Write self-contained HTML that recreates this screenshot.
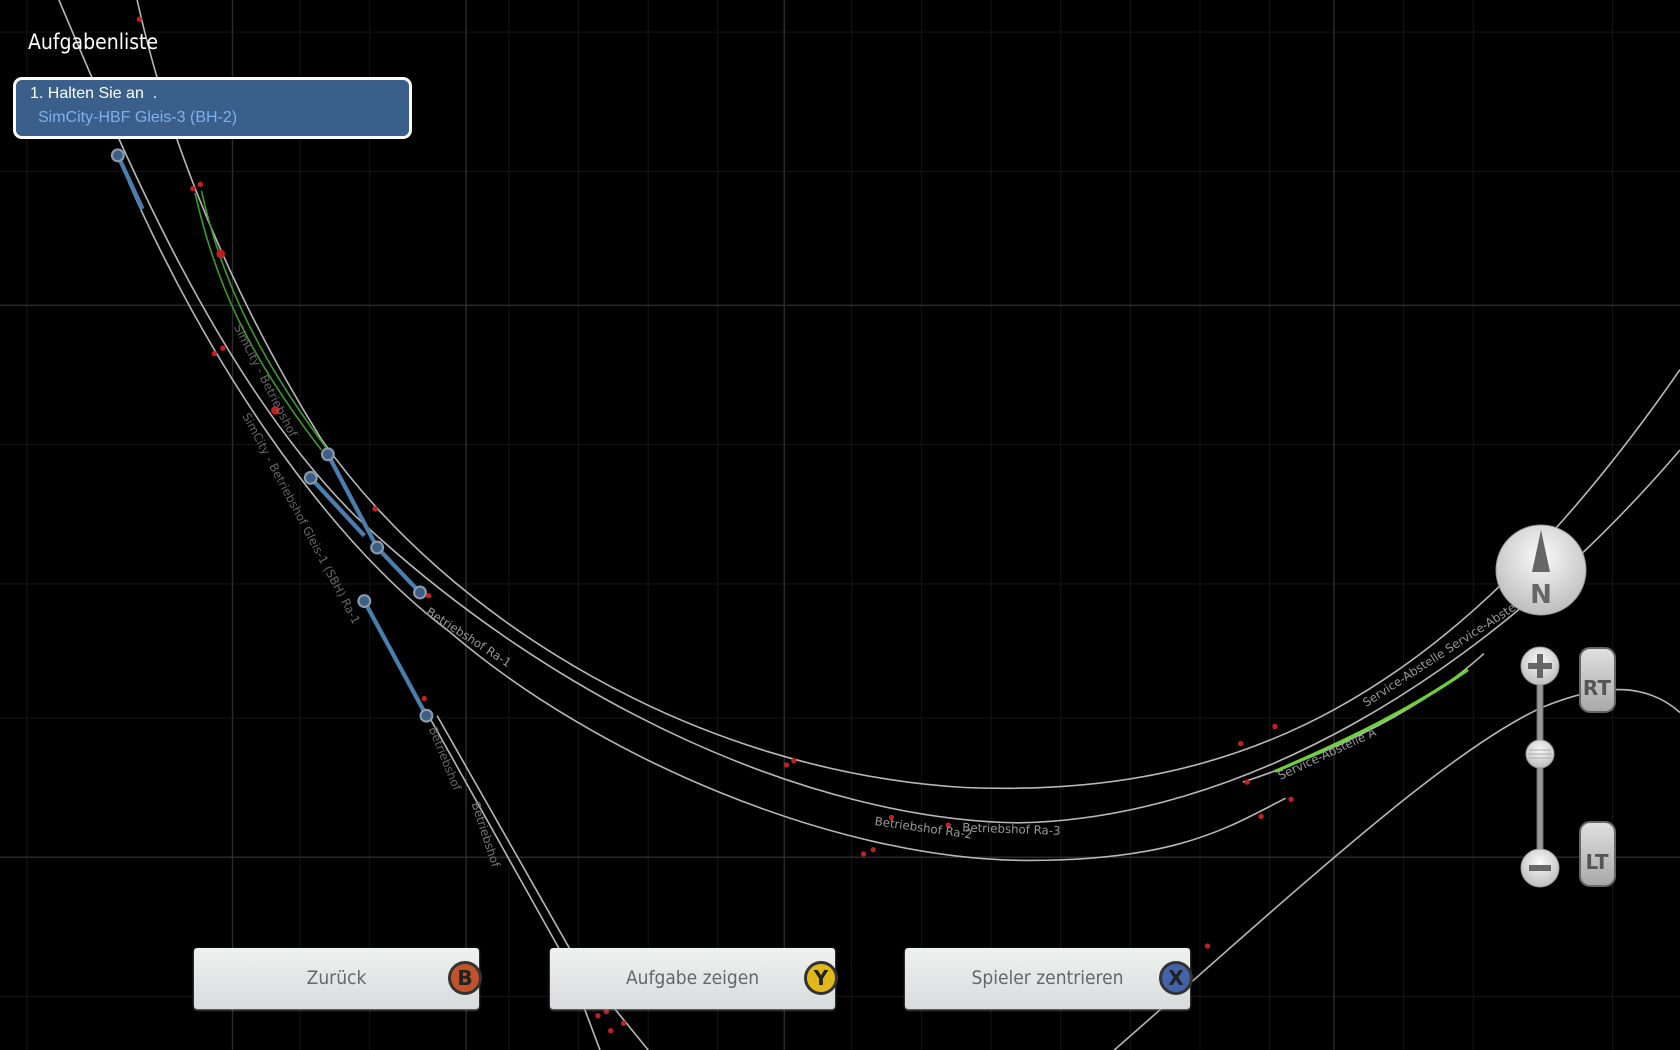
<!DOCTYPE html>
<html><head><meta charset="utf-8"><style>
html,body{margin:0;padding:0;background:#000;width:1680px;height:1050px;overflow:hidden;font-family:"Liberation Sans","DejaVu Sans",sans-serif}
#map{position:absolute;left:0;top:0}
.title{position:absolute;left:28px;top:30px;color:#fff;font-size:21px;font-family:"DejaVu Sans Condensed","DejaVu Sans",sans-serif}
.task{position:absolute;left:13px;top:77px;width:393px;height:56px;border:3px solid #fff;border-radius:9px;background:#3a5f8a}
.task .a{position:absolute;left:14px;top:5px;color:#fff;font-size:16px}
.task .b{position:absolute;left:22px;top:29px;color:#7fb0ea;font-size:16px}
.btn{position:absolute;top:948px;width:285px;height:61px;border-radius:3px;background:linear-gradient(#f0f1f1,#d8dbdc);color:#666;font-size:19px;font-family:"DejaVu Sans Condensed","DejaVu Sans",sans-serif;line-height:61px;text-align:center;box-shadow:0 1px 2px #888}
.ic{position:absolute;right:-3px;top:13px;width:34px;height:34px;border-radius:50%;border:3px solid #333;box-sizing:border-box;font:bold 20px "DejaVu Sans",sans-serif;line-height:28px;text-align:center;color:#222}
</style></head><body>
<svg id="map" width="1680" height="1050" viewBox="0 0 1568 980" preserveAspectRatio="none">
<g stroke="#141414" stroke-width="1">
<line x1="25" y1="0" x2="25" y2="980"/><line x1="280" y1="0" x2="280" y2="980"/><line x1="345" y1="0" x2="345" y2="980"/><line x1="475" y1="0" x2="475" y2="980"/><line x1="540" y1="0" x2="540" y2="980"/><line x1="605" y1="0" x2="605" y2="980"/><line x1="670" y1="0" x2="670" y2="980"/><line x1="795" y1="0" x2="795" y2="980"/><line x1="860" y1="0" x2="860" y2="980"/><line x1="925" y1="0" x2="925" y2="980"/><line x1="990" y1="0" x2="990" y2="980"/><line x1="1055" y1="0" x2="1055" y2="980"/><line x1="1120" y1="0" x2="1120" y2="980"/><line x1="1185" y1="0" x2="1185" y2="980"/><line x1="1310" y1="0" x2="1310" y2="980"/><line x1="1375" y1="0" x2="1375" y2="980"/><line x1="1505" y1="0" x2="1505" y2="980"/>
<line x1="0" y1="30" x2="1568" y2="30"/><line x1="0" y1="160" x2="1568" y2="160"/><line x1="0" y1="415" x2="1568" y2="415"/><line x1="0" y1="545" x2="1568" y2="545"/><line x1="0" y1="670" x2="1568" y2="670"/><line x1="0" y1="930" x2="1568" y2="930"/>
</g>
<g stroke="#2c2c2c" stroke-width="1.3">
<line x1="217" y1="0" x2="217" y2="980"/><line x1="732" y1="0" x2="732" y2="980"/><line x1="1245" y1="0" x2="1245" y2="980"/><line x1="435" y1="0" x2="435" y2="980"/>
<line x1="0" y1="285" x2="1568" y2="285"/><line x1="0" y1="800" x2="1568" y2="800"/>
</g>
<g fill="none" stroke="#b8b8b8" stroke-width="1.5">
<path d="M128 0 C150 100,200 250,300 410 C420 580,650 720,900 735 C1150 745,1350 660,1568 345"/>
<path d="M55 0 C110 130,200 350,330 480 C520 660,760 765,950 768 C1150 765,1380 640,1568 420"/>
<path d="M120 170 C190 330,300 500,420 590 C560 710,780 800,950 803 C1100 805,1150 770,1200 745"/>
<path d="M400 668 L530 900 L560 980" />
<path d="M408 668 L540 900 L605 980" />
<path d="M1040 980 C1200 840,1350 700,1440 660 C1500 635,1540 640,1568 665"/>
<path d="M1160 730 C1250 700,1330 660,1385 610"/>
</g>
<g fill="none" stroke="#3a9a2a" stroke-width="1.5">
<path d="M182 180 C200 260,230 330,300 420"/><path d="M188 178 C205 255,238 330,306 420"/>
</g>
<path d="M1190 720 C1260 690,1320 660,1370 625" stroke="#6cd23a" stroke-width="3" fill="none"/>
<g fill="none" stroke="#4a7fad" stroke-width="4">
<path d="M110 145 L133 195"/><path d="M306 424 L352 511 L392 553"/><path d="M290 446 L340 500"/><path d="M340 561 L398 668"/>
</g>
<g fill="#3d5f85" stroke="#8a9aaa" stroke-width="2">
<circle cx="110" cy="145" r="5.5"/><circle cx="306" cy="424" r="5.5"/><circle cx="290" cy="446" r="5.5"/><circle cx="352" cy="511" r="5.5"/><circle cx="392" cy="553" r="5.5"/><circle cx="340" cy="561" r="5.5"/><circle cx="398" cy="668" r="5.5"/>
</g>
<g fill="#c02020">
<circle cx="130" cy="18" r="2.5"/><circle cx="180" cy="176" r="2.5"/><circle cx="187" cy="172" r="2.5"/><circle cx="206" cy="237" r="4"/><circle cx="200" cy="330" r="2.5"/><circle cx="208" cy="325" r="2.5"/><circle cx="257" cy="383" r="4"/><circle cx="350" cy="475" r="2.5"/><circle cx="400" cy="556" r="2.5"/><circle cx="396" cy="652" r="2.5"/><circle cx="734" cy="714" r="2.5"/><circle cx="741" cy="710" r="2.5"/><circle cx="806" cy="797" r="2.5"/><circle cx="815" cy="793" r="2.5"/><circle cx="832" cy="763" r="2.5"/><circle cx="885" cy="770" r="2.5"/><circle cx="1158" cy="694" r="2.5"/><circle cx="1190" cy="678" r="2.5"/><circle cx="1164" cy="730" r="2.5"/><circle cx="1177" cy="762" r="2.5"/><circle cx="1205" cy="746" r="2.5"/><circle cx="1127" cy="883" r="2.5"/><circle cx="558" cy="948" r="2.5"/><circle cx="566" cy="944" r="2.5"/><circle cx="570" cy="962" r="2.5"/><circle cx="582" cy="955" r="2.5"/>
</g>
<g fill="#999" font-family="DejaVu Sans,sans-serif" font-size="11">
<text transform="translate(397,573) rotate(33)">Betriebshof Ra-1</text>
<text transform="translate(816,770) rotate(8)">Betriebshof Ra-2</text>
<text transform="translate(898,776) rotate(2)">Betriebshof Ra-3</text>
<text transform="translate(1195,728) rotate(-25)">Service-Abstelle A</text>
<text transform="translate(1275,660) rotate(-33)">Service-Abstelle Service-Abstelle B</text>
<text fill="#666" transform="translate(218,305) rotate(63)">SimCity - Betriebshof</text>
<text fill="#666" transform="translate(226,388) rotate(62)">SimCity - Betriebshof Gleis-1 (SBH) Ra-1</text>
<text fill="#666" transform="translate(400,680) rotate(68)">Betriebshof</text>
<text fill="#777" transform="translate(440,750) rotate(72)">Betriebshof</text>
</g>
</svg>
<div class="title">Aufgabenliste</div>
<div class="task"><div class="a">1. Halten Sie an &nbsp;.</div><div class="b">SimCity-HBF Gleis-3 (BH-2)</div></div>
<div class="btn" style="left:194px">Zurück<div class="ic" style="background:#c0532a">B</div></div>
<div class="btn" style="left:550px">Aufgabe zeigen<div class="ic" style="background:#e0b81c">Y</div></div>
<div class="btn" style="left:905px">Spieler zentrieren<div class="ic" style="background:#4462a8">X</div></div>
<svg style="position:absolute;left:1480px;top:510px" width="200" height="400">
<defs><radialGradient id="g" cx="50%" cy="35%" r="65%"><stop offset="0" stop-color="#fafafa"/><stop offset="1" stop-color="#bdbdbd"/></radialGradient>
<linearGradient id="t" x1="0" y1="0" x2="0" y2="1"><stop offset="0" stop-color="#e0e0e0"/><stop offset="1" stop-color="#a8a8a8"/></linearGradient></defs>
<circle cx="61" cy="60" r="45" fill="url(#g)" stroke="#999" stroke-width="1"/>
<path d="M61 20 L52 62 L70 62 Z" fill="#666"/>
<text x="61" y="93" text-anchor="middle" font-family="DejaVu Sans,sans-serif" font-weight="bold" font-size="26" fill="#666">N</text>
<rect x="57" y="166" width="6" height="200" fill="#999" stroke="#666"/>
<circle cx="60" cy="156" r="19" fill="url(#g)" stroke="#999"/>
<path d="M57 144 h6 v9 h9 v6 h-9 v9 h-6 v-9 h-9 v-6 h9z" fill="#666"/>
<circle cx="60" cy="244" r="14" fill="url(#g)" stroke="#999"/>
<g stroke="#aaa"><line x1="49" y1="240" x2="71" y2="240"/><line x1="48" y1="244" x2="72" y2="244"/><line x1="49" y1="248" x2="71" y2="248"/></g>
<circle cx="60" cy="358" r="19" fill="url(#g)" stroke="#999"/>
<rect x="49" y="355" width="22" height="6" fill="#666"/>
<rect x="100" y="138" width="35" height="64" rx="10" fill="url(#t)" stroke="#666" stroke-width="2"/>
<text x="117" y="185" text-anchor="middle" font-family="DejaVu Sans,sans-serif" font-weight="bold" font-size="20" fill="#555">RT</text>
<rect x="100" y="312" width="35" height="64" rx="10" fill="url(#t)" stroke="#666" stroke-width="2"/>
<text x="117" y="359" text-anchor="middle" font-family="DejaVu Sans,sans-serif" font-weight="bold" font-size="20" fill="#555">LT</text>
</svg>
</body></html>
